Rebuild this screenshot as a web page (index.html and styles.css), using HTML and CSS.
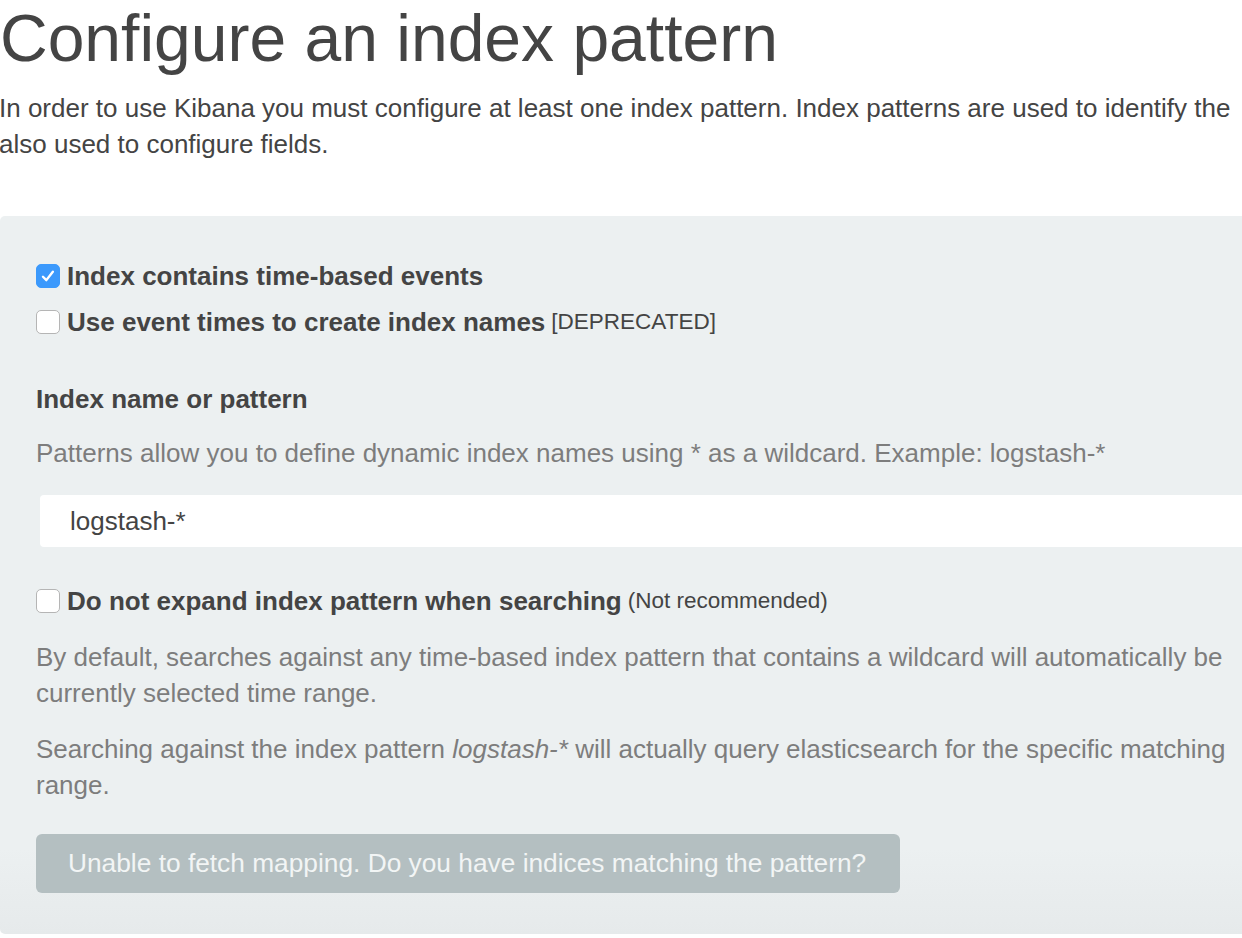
FILE: index.html
```html
<!DOCTYPE html>
<html>
<head>
<meta charset="utf-8">
<link rel="stylesheet" href="styles.css">
</head>
<body>
<div class="page">
  <h1 class="title">Configure an index pattern</h1>
  <p class="intro">In order to use Kibana you must configure at least one index pattern. Index patterns are used to identify the<br>also used to configure fields.</p>

  <div class="panel">
    <label class="check-row">
      <span class="box checked"><svg viewBox="0 0 24 24" width="24" height="24"><path d="M6.5 12.8 L10.2 16.5 L17.3 7.3" fill="none" stroke="#fff" stroke-width="2.6" stroke-linecap="round" stroke-linejoin="round"/></svg></span>
      <span class="check-label">Index contains time-based events</span>
    </label>
    <label class="check-row">
      <span class="box"></span>
      <span class="check-label">Use event times to create index names</span>
      <span class="note">[DEPRECATED]</span>
    </label>

    <div class="field">
      <div class="field-label">Index name or pattern</div>
      <p class="help">Patterns allow you to define dynamic index names using * as a wildcard. Example: logstash-*</p>
      <div class="input">logstash-*</div>
    </div>

    <label class="check-row expand-row">
      <span class="box"></span>
      <span class="check-label">Do not expand index pattern when searching</span>
      <span class="note">(Not recommended)</span>
    </label>

    <p class="help para first">By default, searches against any time-based index pattern that contains a wildcard will automatically be<br>currently selected time range.</p>
    <p class="help para">Searching against the index pattern <em>logstash-*</em> will actually query elasticsearch for the specific matching<br>range.</p>

    <div class="button">Unable to fetch mapping. Do you have indices matching the pattern?</div>
  </div>
</div>
</body>
</html>
```

FILE: styles.css
```css
html, body {
  margin: 0;
  padding: 0;
  background: #fff;
  overflow: hidden;
}

body {
  font-family: "Liberation Sans", Arial, sans-serif;
  color: #444;
  width: 1242px;
  height: 938px;
}

.page {
  width: 1320px;
  white-space: nowrap;
}

.title {
  margin: 0;
  font-size: 66px;
  font-weight: normal;
  line-height: 76px;
  color: #444;
}

.intro {
  margin: 14px 0 0 -1px;
  font-size: 26px;
  line-height: 36px;
  color: #444;
}

.panel {
  margin-top: 54px;
  background: linear-gradient(#ecf0f1 0%, #ecf0f1 88%, #e6eaeb 100%);
  border-radius: 5px;
  padding: 48px 36px 40px 36px;
  height: 630px;
}

.check-row {
  display: flex;
  align-items: center;
  height: 24px;
  gap: 7px;
  margin-bottom: 22px;
}

.box {
  width: 22px;
  height: 22px;
  border: 1px solid #b5b5b5;
  border-radius: 5px;
  background: #fff;
  display: flex;
  align-items: center;
  justify-content: center;
  flex: none;
}

.box.checked {
  background: #3b99fc;
  border-color: #3b99fc;
}

.box svg {
  width: 22px;
  height: 22px;
}

.check-label {
  font-weight: bold;
  font-size: 26px;
  color: #444;
}

.note {
  font-size: 22.5px;
  color: #444;
  margin-left: -1px;
}

.field {
  margin-top: 47px;
}

.field-label {
  font-weight: bold;
  font-size: 26px;
  line-height: 36px;
  color: #444;
}

.help {
  margin: 0;
  font-size: 26px;
  line-height: 36px;
  color: #7d7d7d;
}

.field .help {
  margin-top: 18px;
}

.input {
  margin: 24px 0 0 4px;
  height: 52px;
  background: #fff;
  border-radius: 4px;
  padding-left: 30px;
  font-size: 26px;
  line-height: 52px;
  color: #444;
}

.expand-row {
  margin-top: 42px;
  margin-bottom: 0;
}

.para {
  margin-top: 20px;
}

.para.first {
  margin-top: 26px;
}

.button {
  margin-top: 31px;
  width: 832px;
  height: 59px;
  padding-left: 32px;
  background: #b4bfc1;
  border-radius: 6px;
  color: #f2f5f5;
  font-size: 26.3px;
  line-height: 58px;
}
```
